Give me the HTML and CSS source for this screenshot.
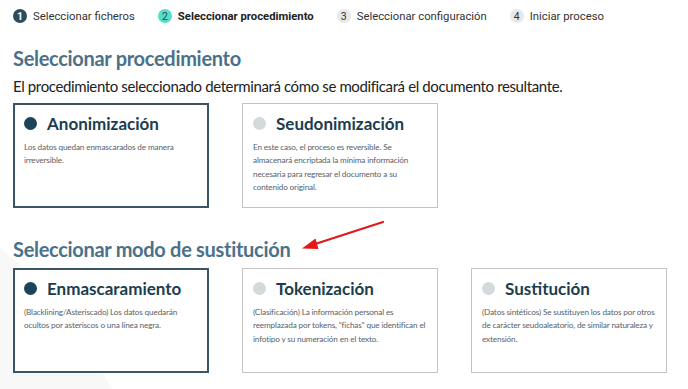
FILE: index.html
```html
<!DOCTYPE html>
<html lang="es">
<head>
<meta charset="utf-8">
<title>Seleccionar procedimiento</title>
<link rel="stylesheet" href="styles.css">
</head>
<body>
<svg class="bg-shape" width="688" height="389" viewBox="0 0 688 389" aria-hidden="true">
  <polygon points="0,248 0,389 112,389 60,300" fill="#f8f8f8"/>
</svg>
<nav class="steps">
  <div class="step done"><span class="num">1</span><span class="label">Seleccionar ficheros</span></div>
  <div class="step current"><span class="num">2</span><span class="label">Seleccionar procedimiento</span></div>
  <div class="step"><span class="num">3</span><span class="label">Seleccionar configuración</span></div>
  <div class="step"><span class="num">4</span><span class="label">Iniciar proceso</span></div>
</nav>
<main class="content">
  <h1 class="title">Seleccionar procedimiento</h1>
  <p class="lead">El procedimiento seleccionado determinará cómo se modificará el documento resultante.</p>
  <div class="cards">
    <div class="card selected">
      <div class="card-head"><span class="radio"></span><span class="card-title">Anonimización</span></div>
      <p class="desc">Los datos quedan enmascarados de manera irreversible.</p>
    </div>
    <div class="card">
      <div class="card-head"><span class="radio"></span><span class="card-title">Seudonimización</span></div>
      <p class="desc">En este caso, el proceso es reversible. Se almacenará encriptada la mínima información necesaria para regresar el documento a su contenido original.</p>
    </div>
  </div>
  <h2 class="title second">Seleccionar modo de sustitución</h2>
  <div class="cards">
    <div class="card selected">
      <div class="card-head"><span class="radio"></span><span class="card-title">Enmascaramiento</span></div>
      <p class="desc">(Blacklining/Asteriscado) Los datos quedarán ocultos por asteriscos o una línea negra.</p>
    </div>
    <div class="card">
      <div class="card-head"><span class="radio"></span><span class="card-title">Tokenización</span></div>
      <p class="desc">(Clasificación) La información personal es reemplazada por tokens, "fichas" que identifican el infotipo y su numeración en el texto.</p>
    </div>
    <div class="card">
      <div class="card-head"><span class="radio"></span><span class="card-title">Sustitución</span></div>
      <p class="desc">(Datos sintéticos) Se sustituyen los datos por otros de carácter seudoaleatorio, de similar naturaleza y extensión.</p>
    </div>
  </div>
</main>
<svg class="arrow" width="688" height="389" viewBox="0 0 688 389" aria-hidden="true">
  <line x1="383" y1="222" x2="312" y2="245" stroke="#e0191b" stroke-width="2.2" stroke-linecap="round"/>
  <polygon points="302,248.5 315.5,238.5 318.5,249" fill="#e0191b"/>
</svg>
</body>
</html>
```
FILE: styles.css
```css
* { box-sizing: border-box; }
html, body { margin: 0; padding: 0; }
body {
  width: 688px;
  height: 389px;
  overflow: hidden;
  background: #ffffff;
  position: relative;
  font-family: Lato, "Open Sans", sans-serif;
}
.bg-shape, .arrow {
  position: absolute;
  left: 0;
  top: 0;
  pointer-events: none;
}
.bg-shape { z-index: 0; }
.arrow { z-index: 5; }

.steps {
  position: relative;
  z-index: 1;
  display: flex;
  gap: 23px;
  padding: 8px 0 0 13px;
  height: 32px;
  font-family: Roboto, sans-serif;
  font-size: 11.3px;
  color: #333;
}
.step { display: flex; align-items: center; gap: 6px; height: 16px; }
.num {
  width: 14px;
  height: 14px;
  border-radius: 50%;
  background: #e8e8e8;
  color: #333;
  font-size: 10.5px;
  display: flex;
  align-items: center;
  justify-content: center;
}
.step.done .num { background: #2c4b5f; color: #fff; font-weight: 700; }
.step.current .num { background: #55ddc8; color: #2a4b5a; }
.step.current .label { font-weight: 700; color: #222; }

.content {
  position: relative;
  z-index: 1;
  padding: 0 13px;
}
.title {
  margin: 0;
  padding-top: 13px;
  font-size: 20px;
  letter-spacing: -0.3px;
  line-height: 26px;
  font-weight: 700;
  color: #4b7189;
}
.title.second { padding-top: 28px; }
.lead {
  margin: 4px 0 0 0;
  font-size: 15px;
  letter-spacing: -0.38px;
  line-height: 22px;
  color: #222;
}
.cards {
  display: flex;
  gap: 33px;
  margin-top: 6px;
}
.title.second + .cards { margin-top: 6px; }
.card {
  width: 196px;
  height: 105px;
  border: 1px solid #c3c3c3;
  background: #fff;
  padding: 7px 6px 0 10px;
}
.card.selected {
  border: 2px solid #3b5566;
  padding: 6px 5px 0 9px;
}
.card-head { display: flex; align-items: center; gap: 10px; height: 24px; }
.radio {
  width: 13px;
  height: 13px;
  border-radius: 50%;
  background: #d4d9dc;
  flex: none;
}
.selected .radio { background: #1c4458; }
.card-title {
  font-size: 17px;
  font-weight: 700;
  color: #1b3d50;
}
.desc {
  margin: 6px 0 0 0;
  font-size: 8.2px;
  letter-spacing: -0.15px;
  line-height: 13.4px;
  color: #57616a;
}
```
